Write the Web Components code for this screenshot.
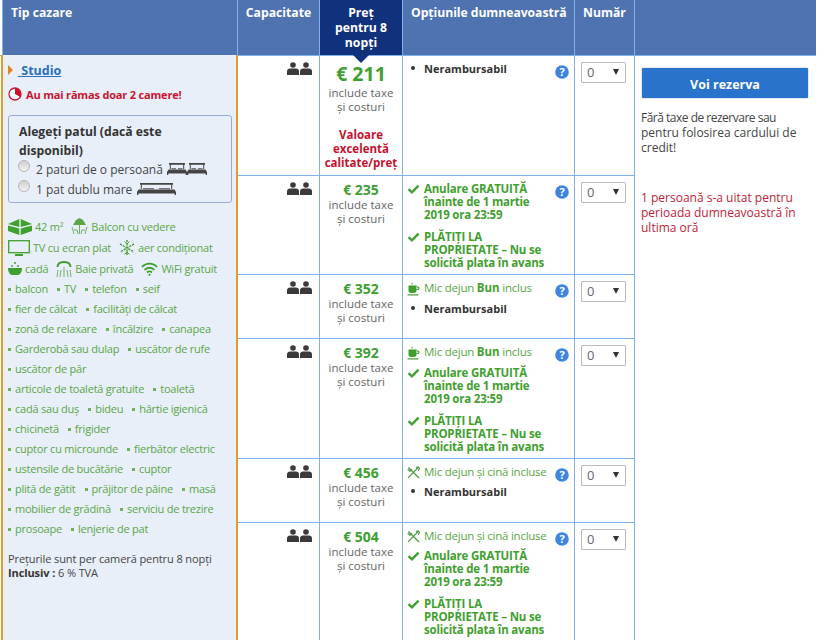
<!DOCTYPE html>
<html lang="ro">
<head>
<meta charset="utf-8">
<title>Tip cazare</title>
<style>
  html, body { margin: 0; height: 640px; overflow: hidden; background: #fff; }
  body { font: 12px/15px "Open Sans", "Noto Sans", "Liberation Sans", sans-serif; color: #333; --cols: 82px 83px 172px 60px; --line: #7db3ea; --green: #3f9f2f; }
  booking-page { width: 816px; }
</style>
</head>
<body>

<booking-page>
  <room-info slot="room"></room-info>
  <rate-row slot="rates" h="120" price="€ 211" big="1" plan="none" cancel="none" deal="1"></rate-row>
  <rate-row slot="rates" h="99" price="€ 235" plan="none" cancel="free"></rate-row>
  <rate-row slot="rates" h="64" price="€ 352" plan="bun" cancel="none"></rate-row>
  <rate-row slot="rates" h="120" price="€ 392" plan="bun" cancel="free"></rate-row>
  <rate-row slot="rates" h="64" price="€ 456" plan="cina" cancel="none"></rate-row>
  <rate-row slot="rates" h="125" price="€ 504" plan="cina" cancel="free"></rate-row>
  <action-panel slot="action"></action-panel>
</booking-page>

<script>
// shared inline icons
const icons = {
  people: `<svg width="26" height="13" viewBox="0 0 26 13" fill="#3a3a3a"><circle cx="6" cy="3" r="2.8"/><path d="M0 13V9.5C0 7.5 1.5 6.6 3 6.6h6c1.5 0 3 .9 3 2.9V13z"/><circle cx="19" cy="3" r="2.8"/><path d="M13 13V9.5c0-2 1.5-2.9 3-2.9h6c1.5 0 3 .9 3 2.9V13z"/></svg>`,
  bed: `<svg width="20" height="13" viewBox="0 0 20 13" fill="#444"><path d="M2 0h16v1.800h-.8V6h-1V1.800H3.800V6h-1V1.800H2z"/><path d="M4.500 5h4.500v1.200H4.500zM11 5h4.500v1.200H11z" fill="#777"/><path d="M1.500 6.500h17L20 9v3h-1.300v-1.500H1.300V12H0V9z"/></svg>`,
  bedWide: `<svg width="39" height="13" viewBox="0 0 39 13" fill="#444"><path d="M3 0h33v1.800h-.8V6h-1V1.800H4.800V6h-1V1.800H3z"/><path d="M6 5h11v1.200H6zM22 5h11v1.200H22z" fill="#777"/><path d="M1.500 6.500h36L39 9v3h-1.300v-1.500H1.300V12H0V9z"/></svg>`,
  check: `<svg width="12" height="10" viewBox="0 0 12 10"><path d="M1 5.2l3.400 3.200L11 1.600" fill="none" stroke="#3f9f2f" stroke-width="2.300"/></svg>`,
  cup: `<svg width="13" height="14" viewBox="0 0 13 14" fill="#3f9f2f"><path d="M5 0c1 1 0 1.500 .5 2.500H4.500C4 1.500 5 1 5 0z"/><path d="M1.500 3.500h8v5c0 1.500-1 2.500-2.500 2.500H4c-1.500 0-2.500-1-2.500-2.500z"/><path d="M9.500 4.500h1.300c1.200 0 1.700 .8 1.700 1.700s-.7 1.800-1.800 1.800H9.500V7h1c.4 0 .8-.3 .8-.8s-.3-.7-.8-.7h-1z"/><path d="M.5 12.300h11v1.200H.5z"/></svg>`,
  cutlery: `<svg width="13" height="13" viewBox="0 0 13 13" fill="none" stroke="#4d9a44" stroke-width="1.200"><path d="M1.500 1.500L12 12"/><path d="M11.800 1L1 11.800"/><path d="M.8 3l2.200 2.200L5 3.500"/><path d="M9 1.800c1-.8 2.500-.8 3 0s.2 2-1 3"/></svg>`,
  help: `<svg width="14" height="14" viewBox="0 0 14 14"><circle cx="7" cy="7" r="6.800" fill="#3d85e0"/><text x="7" y="10.800" text-anchor="middle" font-family="Open Sans, sans-serif" font-size="11" font-weight="700" fill="#fff">?</text></svg>`
};

class BookingPage extends HTMLElement {
  constructor() {
    super();
    this.attachShadow({ mode: 'open' });
    this.shadowRoot.innerHTML = `
      <style>
        :host { display: block; color: #333; }
        .head { display: flex; height: 55px; margin-left: 2px; background: #4f73b0; color: #fff; font-weight: 700; font-size: 12.2px; line-height: 15px; }
        .head > div { border-right: 1px solid var(--line); padding-top: 5px; box-sizing: border-box; }
        .type { width: 236px; padding-left: 8px; border-left: 1px solid var(--line); }
        .type, .cap, .opt, .num { white-space: nowrap; }
        .cap { width: 82px; text-align: center; }
        .price { width: 83px; text-align: center; background: #12317d; position: relative; }
        .price::after { content: ""; position: absolute; left: 33px; top: 55px; border: 8px solid transparent; border-top-color: #12317d; border-bottom: 0; z-index: 2; }
        .opt { width: 172px; padding-left: 8px; letter-spacing: -.05px; }
        .num { width: 60px; text-align: center; }
        .rest { flex: 1; border-right: 0 !important; }
        .body { display: flex; align-items: stretch; border-top: 1px solid var(--line); height: 600px; }
        .room { flex: none; width: 237px; margin-left: 1px; }
        .rates { flex: none; width: 397px; }
        .action { flex: none; width: 181px; }
      </style>
      <div class="head">
        <div class="type">Tip cazare</div>
        <div class="cap">Capacitate</div>
        <div class="price">Preț<br>pentru 8<br>nopți</div>
        <div class="opt">Opțiunile dumneavoastră</div>
        <div class="num">Număr</div>
        <div class="rest"></div>
      </div>
      <div class="body">
        <div class="room"><slot name="room"></slot></div>
        <div class="rates"><slot name="rates"></slot></div>
        <div class="action"><slot name="action"></slot></div>
      </div>`;
  }
}

class FacilityLine extends HTMLElement {
  constructor() {
    super();
    this.attachShadow({ mode: 'open' });
    const items = (this.getAttribute('items') || '').split('|');
    this.shadowRoot.innerHTML = `
      <style>
        :host { display: flex; gap: 9px; height: 20px; line-height: 20px; font-size: 11px; letter-spacing: -.22px; color: #5aa646; white-space: nowrap; }
        span::before { content: ""; display: inline-block; width: 3px; height: 3px; background: #6db35a; margin: 0 4px 2px 0; }
      </style>
      ${items.map(t => `<span>${t}</span>`).join('')}`;
  }
}

class RoomInfo extends HTMLElement {
  constructor() {
    super();
    this.attachShadow({ mode: 'open' });
    this.shadowRoot.innerHTML = `
      <style>
        :host { display: block; height: 600px; box-sizing: border-box; background: #e8eff9; border-left: 2px solid #e39a2c; border-right: 2px solid #e39a2c; margin-top: -1px; padding: 7px 5px 0 5px; font-size: 11px; }
        .title { display: flex; align-items: center; height: 16px; gap: 5px; font-weight: 700; font-size: 12.5px; }
        .title i { width: 0; height: 0; border-left: 5px solid #e5801c; border-top: 5px solid transparent; border-bottom: 5px solid transparent; }
        .title a { color: #2a6fc0; text-decoration: underline; white-space: pre; }
        .left { display: flex; align-items: center; gap: 4px; margin-top: 8px; height: 16px; color: #cc1430; font-weight: 700; font-size: 11px; letter-spacing: -.18px; white-space: nowrap; }
        .beds { margin-top: 13px; width: 224px; height: 88px; box-sizing: border-box; border: 1px solid #9aaad6; border-radius: 3px; padding: 6px 10px 0; color: #444; font-size: 12px; }
        .beds b { display: block; font-size: 12.2px; line-height: 19px; color: #333; margin-bottom: -1px; }
        .opt { display: flex; align-items: center; height: 20px; gap: 5px; white-space: nowrap; }
        .radio { width: 12px; height: 12px; margin: -7px 1px 0 -1px; border-radius: 50%; border: 1px solid #b5b5b5; box-sizing: border-box; background: linear-gradient(#cfcfcf, #f2f2f2); }
        .feat { display: flex; align-items: center; height: 21px; color: #5aa646; white-space: nowrap; font-size: 11px; letter-spacing: -.22px; }
        .feat svg { flex: none; margin-right: 3px; }
        .feat span { margin-right: 8px; }
        .feats { margin-top: 13px; }
        .note { margin-top: 13px; line-height: 14px; color: #444; white-space: nowrap; font-size: 11px; letter-spacing: -.1px; }
        .note b { color: #333; }
      </style>
      <div class="title"><i></i><a> Studio</a></div>
      <div class="left">
        <svg width="14" height="14" viewBox="0 0 14 14"><circle cx="7" cy="7" r="6" fill="#fff" stroke="#cc1430" stroke-width="1.300"/><path d="M7 7V1a6 6 0 0 1 5.200 9z" fill="#cc1430"/></svg>
        Au mai rămas doar 2 camere!
      </div>
      <div class="beds">
        <b>Alegeți patul (dacă este disponibil)</b>
        <div class="opt"><span class="radio"></span>2 paturi de o persoană <span style="display:flex;margin-left:-1px">${icons.bed}${icons.bed}</span></div>
        <div class="opt"><span class="radio"></span>1 pat dublu mare ${icons.bedWide}</div>
      </div>
      <div class="feats">
        <div class="feat">
          <svg width="24" height="16" viewBox="0 0 24 16" fill="#3f9f2f"><path d="M0 5L11.300 0v8zM24 5L12.700 0v8zM0 6.500l11.300 3v6.500L0 12zM24 6.500l-11.300 3v6.500L24 12z"/></svg>
          <span style="margin-right:8px">42 m²</span>
          <svg width="17" height="17" viewBox="0 0 17 17" fill="none" stroke="#6aa85a" stroke-width=".9"><path d="M2 7l3-5 3.500-2 3.500 2 3 5z" fill="#5aa646" stroke="none"/><path d="M8.500 6v10M1 9l2 7M16 9l-2 7M3 12h3l1 4M14 12h-3l-1 4"/></svg>
          <span>Balcon cu vedere</span>
        </div>
        <div class="feat">
          <svg width="22" height="16" viewBox="0 0 22 16" fill="none" stroke="#3f9f2f" stroke-width="1.300"><rect x=".7" y=".7" width="20.600" height="12"/><path d="M7 15h8" stroke-width="2"/></svg>
          <span>TV cu ecran plat</span>
          <svg width="16" height="16" viewBox="0 0 16 16" stroke="#4f9f3d" stroke-width="1.500" stroke-dasharray="2.200 1"><path d="M8 0v16M1 4l14 8M15 4L1 12"/><path d="M5.500 1.500L8 4l2.500-2.500M5.500 14.500L8 12l2.500 2.500" fill="none" stroke-dasharray="none" stroke-width="1"/></svg>
          <span>aer condiționat</span>
        </div>
        <div class="feat">
          <svg width="14" height="15" viewBox="0 0 14 15" fill="#3f9f2f"><path d="M0 7h14c0 4-2 7-4 7H4C2 14 0 11 0 7z"/><circle cx="7" cy="2" r="1"/><circle cx="4" cy="5" r=".9"/><circle cx="10" cy="5" r=".9"/></svg>
          <span>cadă</span>
          <svg width="16" height="16" viewBox="0 0 16 16" fill="none" stroke="#6aa85a" stroke-width=".9" style="margin-right:3px"><path d="M1.500 6C1.500 2.500 4.500 1 8 1s6.500 1.500 6.500 5" stroke="#3f9f2f" stroke-width="2"/><path d="M8 6v10M5 9l-1 7M11 9l1 7M2 9l-1 7M14 9l1 7"/></svg>
          <span>Baie privată</span>
          <svg width="17" height="14" viewBox="0 0 17 14" fill="none" stroke="#3f9f2f" stroke-width="1.800"><path d="M1 5c4-4.500 11-4.500 15 0M3.500 8c2.800-3 7.200-3 10 0M6 10.500c1.400-1.300 3.600-1.300 5 0"/><circle cx="8.500" cy="12.800" r="1.100" fill="#3f9f2f" stroke="none"/></svg>
          <span>WiFi gratuit</span>
        </div>
        <facility-line items="balcon|TV|telefon|seif"></facility-line>
        <facility-line items="fier de călcat|facilități de călcat"></facility-line>
        <facility-line items="zonă de relaxare|încălzire|canapea"></facility-line>
        <facility-line items="Garderobă sau dulap|uscător de rufe"></facility-line>
        <facility-line items="uscător de păr"></facility-line>
        <facility-line items="articole de toaletă gratuite|toaletă"></facility-line>
        <facility-line items="cadă sau duș|bideu|hârtie igienică"></facility-line>
        <facility-line items="chicinetă|frigider"></facility-line>
        <facility-line items="cuptor cu microunde|fierbător electric"></facility-line>
        <facility-line items="ustensile de bucătărie|cuptor"></facility-line>
        <facility-line items="plită de gătit|prăjitor de pâine|masă"></facility-line>
        <facility-line items="mobilier de grădină|serviciu de trezire"></facility-line>
        <facility-line items="prosoape|lenjerie de pat"></facility-line>
      </div>
      <div class="note">Prețurile sunt per cameră pentru 8 nopți<br><b>Inclusiv :</b> 6 % TVA</div>`;
  }
}

class RateRow extends HTMLElement {
  constructor() {
    super();
    this.attachShadow({ mode: 'open' });
    const a = n => this.getAttribute(n);
    const plans = {
      bun: `<div class="line plan">${icons.cup}<span>Mic dejun <b>Bun</b> inclus</span></div>`,
      cina: `<div class="line plan">${icons.cutlery}<span>Mic dejun și cină incluse</span></div>`,
      none: ''
    };
    const cancel = a('cancel') === 'free'
      ? `<div class="line free">${icons.check}<span>Anulare GRATUITĂ<br>înainte de 1 martie<br>2019 ora 23:59</span></div>
         <div class="line free">${icons.check}<span>PLĂTIȚI LA<br>PROPRIETATE – Nu se<br>solicită plata în avans</span></div>`
      : `<div class="line nr"><i></i><span>Nerambursabil</span></div>`;
    this.shadowRoot.innerHTML = `
      <style>
        :host { display: grid; grid-template-columns: var(--cols); height: ${a('h')}px; box-sizing: border-box; border-bottom: 1px solid var(--line); overflow: hidden; font-size: 11.5px; }
        .cell { border-right: 1px solid var(--line); box-sizing: border-box; }
        .cap { text-align: right; padding: 6px 6px 0 0; }
        .price { text-align: center; padding-top: 5px; color: #666; line-height: 14px; }
        .amount { color: var(--green); font-weight: 700; font-size: ${a('big') ? '19.5px' : '14px'}; line-height: ${a('big') ? '24px' : '17px'}; margin-top: ${a('big') ? '1px' : '0'}; }
        .deal { margin-top: 14px; color: #c41230; font-weight: 700; line-height: 14px; }
        .opts { position: relative; padding: 5px 0 0 4px; }
        .line { display: flex; gap: 4px; line-height: 13px; margin-bottom: 9px; white-space: nowrap; }
        .line svg { flex: none; margin-top: 2px; width: 13px; }
        .free:first-child { margin-top: 1px; }
        .plan { color: #5aa646; line-height: 15px; margin-bottom: 6px; letter-spacing: -.25px; }
        .plan b { color: #3f9f2f; letter-spacing: 0; }
        .free { color: var(--green); font-weight: 700; letter-spacing: -.2px; }
        .nr { color: #333; font-weight: 700; font-size: 11px; line-height: 15px; }
        .plan + .nr { margin-top: -1px; }
        .nr i { flex: none; width: 4px; height: 4px; border-radius: 50%; background: #333; margin: 5px 5px 0 4px; }
        .help { position: absolute; right: 5px; top: 9px; line-height: 0; }
        .num { padding: 6px 0 0 6px; }
        .sel { display: flex; justify-content: space-between; align-items: center; width: 45px; height: 21px; box-sizing: border-box; border: 1px solid #bbb; border-radius: 1px; padding: 0 5px; color: #666; font-size: 13px; background: #fff; }
        .sel i { width: 0; height: 0; margin: -2px 1px 0 0; border-left: 3.500px solid transparent; border-right: 3.500px solid transparent; border-top: 6px solid #333; }
      </style>
      <div class="cell cap">${icons.people}</div>
      <div class="cell price">
        <div class="amount">${a('price')}</div>
        include taxe<br>și costuri
        ${a('deal') ? '<div class="deal">Valoare excelentă calitate/preț</div>' : ''}
      </div>
      <div class="cell opts">
        ${plans[a('plan')]}
        ${cancel}
        <span class="help">${icons.help}</span>
      </div>
      <div class="cell num"><div class="sel">0<i></i></div></div>`;
  }
}

class ActionPanel extends HTMLElement {
  constructor() {
    super();
    this.attachShadow({ mode: 'open' });
    this.shadowRoot.innerHTML = `
      <style>
        :host { display: block; padding: 12px 8px 0 6px; font-size: 12px; line-height: 15px; color: #444; }
        button { display: block; width: 166px; height: 30px; margin: 0 0 12px 1px; padding: 2px 0 0; border: 0; border-radius: 1px; background: #2a73cc; box-shadow: 0 0 0 1px #e3e8f2; color: #fff; font: 700 12.5px "Open Sans", sans-serif; }
        .hot { margin-top: 35px; color: #c0223a; }
        .tight { letter-spacing: -.5px; }
      </style>
      <button>Voi rezerva</button>
      <div><span class="tight">Fără taxe de rezervare sau</span> pentru folosirea cardului de credit!</div>
      <div class="hot">1 persoană s-a uitat pentru perioada dumneavoastră în ultima oră</div>`;
  }
}

customElements.define('booking-page', BookingPage);
customElements.define('facility-line', FacilityLine);
customElements.define('room-info', RoomInfo);
customElements.define('rate-row', RateRow);
customElements.define('action-panel', ActionPanel);
</script>
</body>
</html>
